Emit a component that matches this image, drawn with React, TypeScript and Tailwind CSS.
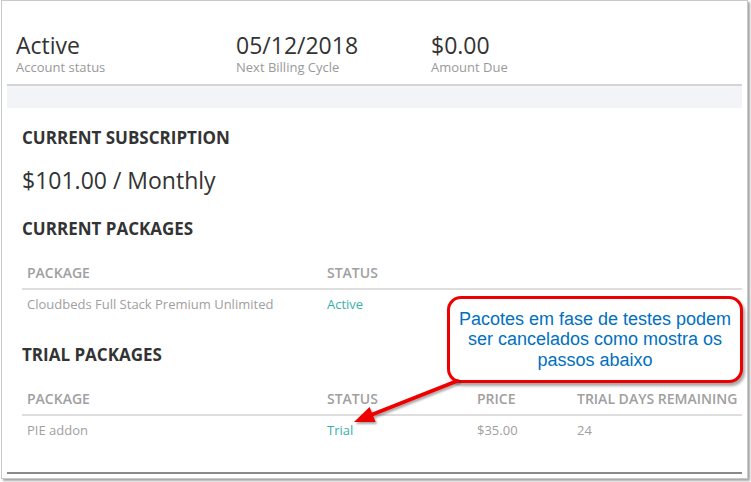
import React from "react";

const sans = { fontFamily: '"Open Sans", "Noto Sans", sans-serif' };

function Stat({ value, label, w }: { value: string; label: string; w: string }) {
  return (
    <div className={`${w} flex flex-col`}>
      <div className="text-[23px] leading-[24px] text-[#333]">{value}</div>
      <div className="mt-[2px] text-[13px] leading-[17px] text-[#999]">{label}</div>
    </div>
  );
}

export default function App() {
  return (
    <div className="w-[751px] h-[482px] bg-white relative overflow-hidden" style={sans}>
      <div className="ml-[1px] w-[747px] h-[479px] bg-white border-l border-t border-r border-b border-[#c9c9c9] shadow-[2px_2px_2px_rgba(0,0,0,0.35)] flex flex-col">
        {/* top stats */}
        <div className="pt-[32px] pl-[14px] h-[83px] flex">
          <Stat value="Active" label="Account status" w="w-[220px]" />
          <Stat value="05/12/2018" label="Next Billing Cycle" w="w-[195px]" />
          <Stat value="$0.00" label="Amount Due" w="w-[150px]" />
        </div>
        {/* gray band */}
        <div className="mx-[5px] h-[24px] bg-[#f3f4f8] border-t-2 border-[#d4d4d8]" />

        <div className="pl-[20px] pr-[5px] flex flex-col">
          <div className="mt-[19px] text-[17px] leading-[22px] font-bold text-[#333]">CURRENT SUBSCRIPTION</div>
          <div className="mt-[17px] text-[23px] leading-[28px] text-[#333]">$101.00 / Monthly</div>
          <div className="mt-[24px] text-[17px] leading-[22px] font-bold text-[#333]">CURRENT PACKAGES</div>

          <div className="mt-[24px] flex text-[14px] leading-[18px] font-semibold text-[#a0a0a0] pb-[6px] border-b-2 border-[#dedede]">
            <div className="w-[300px] pl-[5px]">PACKAGE</div>
            <div className="w-[150px] pl-[5px]">STATUS</div>
          </div>
          <div className="mt-[5px] flex text-[13px] leading-[18px] text-[#a0a0a0]">
            <div className="w-[300px] pl-[5px]">Cloudbeds Full Stack Premium Unlimited</div>
            <div className="w-[150px] pl-[5px] text-[#3aafa9]">Active</div>
          </div>

          <div className="mt-[31px] text-[17px] leading-[22px] font-bold text-[#333]">TRIAL PACKAGES</div>

          <div className="mt-[24px] flex text-[14px] leading-[18px] font-semibold text-[#a0a0a0] pb-[6px] border-b-2 border-[#dedede]">
            <div className="w-[300px] pl-[5px]">PACKAGE</div>
            <div className="w-[150px] pl-[5px]">STATUS</div>
            <div className="w-[100px] pl-[5px]">PRICE</div>
            <div className="flex-1 pl-[5px]">TRIAL DAYS REMAINING</div>
          </div>
          <div className="mt-[5px] flex text-[13px] leading-[18px] text-[#a0a0a0]">
            <div className="w-[300px] pl-[5px]">PIE addon</div>
            <div className="w-[150px] pl-[5px] text-[#3aafa9]">Trial</div>
            <div className="w-[100px] pl-[5px]">$35.00</div>
            <div className="flex-1 pl-[5px]">24</div>
          </div>
        </div>
        <div className="mt-[33px] mx-[5px] h-[2px] bg-[#8a8a8a]" />
      </div>

      {/* callout */}
      <div className="absolute left-[447px] top-[296px] w-[296px] h-[87px] border-[3px] border-[#ee0000] rounded-[14px] bg-white shadow-[2px_3px_3px_rgba(0,0,0,0.35)] flex items-center justify-center">
        <div
          className="text-center text-[18px] leading-[20.5px] text-[#0070c0] whitespace-nowrap"
          style={{ fontFamily: '"Liberation Sans", Arial, sans-serif' }}
        >
          Pacotes em fase de testes podem
          <br />
          ser cancelados como mostra os
          <br />
          passos abaixo
        </div>
      </div>

      {/* arrow */}
      <svg className="absolute left-0 top-0 pointer-events-none" width="751" height="482" viewBox="0 0 751 482">
        <defs>
          <filter id="sh" x="-20%" y="-20%" width="140%" height="140%">
            <feDropShadow dx="1.5" dy="2" stdDeviation="1.2" floodColor="#000" floodOpacity="0.35" />
          </filter>
        </defs>
        <g filter="url(#sh)">
          <line x1="457" y1="381" x2="371" y2="415" stroke="#ee0000" strokeWidth="4" strokeLinecap="round" />
          <polygon points="354,422 369.6,407 375.6,422" fill="#ee0000" />
        </g>
      </svg>
    </div>
  );
}
